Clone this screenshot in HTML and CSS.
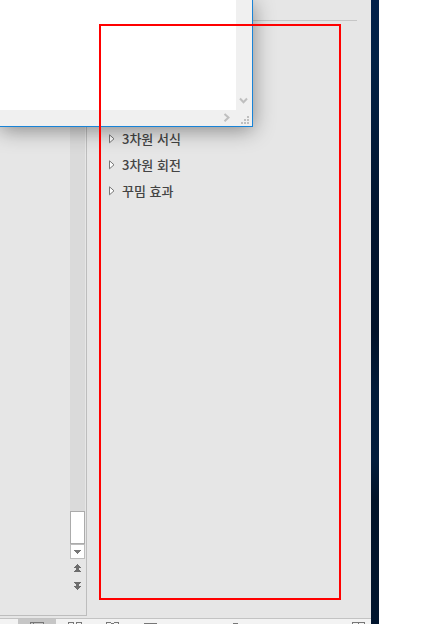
FILE: index.html
```html
<!DOCTYPE html>
<html lang="ko">
<head>
<meta charset="utf-8">
<title>도형 서식</title>
<link rel="stylesheet" href="styles.css">
</head>
<body>
<div class="screen">
  <div class="app">
    <div class="workspace">
      <div class="slide-area">
        <div class="scrollbar">
          <div class="track"></div>
          <div class="thumb"></div>
          <div class="scroll-button"><svg width="7" height="4" shape-rendering="crispEdges"><path fill="#777" d="M0 0h7v1H0zM1 1h5v1H1zM2 2h3v1H2zM3 3h1v1H3z"/></svg></div>
          <svg class="page-nav" width="7" height="26" shape-rendering="crispEdges"><path fill="#6c6c6c" d="M3 0h1v1H3zM2 1h3v1H2zM1 2h5v1H1zM0 3h7v1H0zM2 4h3v1H2zM2 5h3v1H2zM1 6h5v1H1zM0 7h7v1H0zM0 18h7v1H0zM1 19h5v1H1zM2 20h3v1H2zM2 21h3v1H2zM0 22h7v1H0zM1 23h5v1H1zM2 24h3v1H2zM3 25h1v1H3z"/></svg>
        </div>
      </div>
      <div class="pane">
        <div class="divider"></div>
        <ul class="sections">
          <li><svg width="6" height="10"><path d="M.5 .8L5 4.8L.5 8.8z"/></svg><span>3차원 서식</span></li>
          <li><svg width="6" height="10"><path d="M.5 .8L5 4.8L.5 8.8z"/></svg><span>3차원 회전</span></li>
          <li><svg width="6" height="10"><path d="M.5 .8L5 4.8L.5 8.8z"/></svg><span>꾸밈 효과</span></li>
        </ul>
      </div>
    </div>
    <div class="statusbar">
      <svg width="371" height="5" shape-rendering="crispEdges">
        <path fill="#c6c6c6" d="M18 0h38v5H18z"/>
        <path fill="#777" d="M30 3h14v1H30zM30 4h1v1h-1zM33 4h1v1h-1zM43 4h1v1h-1zM68 3h6v1h-6zM68 4h1v1h-1zM73 4h1v1h-1zM76 3h6v1h-6zM76 4h1v1h-1zM81 4h1v1h-1zM106 3h5v1h-5zM106 4h1v1h-1zM111 4h3v1h-3zM114 3h5v1h-5zM118 4h1v1h-1zM144 4h13v1h-13zM233 4h5v1h-5zM352 3h13v1h-13zM352 4h1v1h-1zM358 4h1v1h-1zM364 4h1v1h-1z"/>
      </svg>
    </div>
  </div>
  <div class="desktop"></div>
  <div class="dialog">
    <div class="dialog-body"></div>
    <svg class="dialog-scroll" width="252" height="126" shape-rendering="crispEdges">
      <g fill="none" stroke="#bfbfbf" stroke-width="2" shape-rendering="auto"><path d="M240 98.5l3.5 3.7l3.5-3.7"/><path d="M224.5 114l4 3.6l-4 3.6"/></g>
      <path fill="#bfbfbf" d="M247 116h2v2h-2zM244 119h2v2h-2zM247 119h2v2h-2zM241 122h2v2h-2zM244 122h2v2h-2zM247 122h2v2h-2z"/>
    </svg>
  </div>
  <div class="highlight"></div>
</div>
</body>
</html>
```
FILE: styles.css
```css
* { box-sizing: border-box; }
body { margin: 0; background: #fff; font-family: "Noto Sans CJK KR", sans-serif; }
.screen { position: relative; display: flex; width: 440px; height: 624px; overflow: hidden; }
.app { display: flex; flex-direction: column; width: 371px; background: #e6e6e6; }
.workspace { display: flex; height: 618px; }
.slide-area { display: flex; justify-content: flex-end; width: 87px; height: 616px; padding-right: 1px; border-right: 1px solid #bdbdbd; border-bottom: 1px solid #bdbdbd; }
.scrollbar { display: flex; flex-direction: column; align-items: center; width: 15px; }
.track { width: 15px; height: 511px; background: #dadada; }
.thumb { width: 15px; height: 33px; background: #fff; border: 1px solid #ababab; }
.scroll-button { display: flex; align-items: center; justify-content: center; width: 15px; height: 15px; background: #fff; border: 1px solid #bdbdbd; }
.page-nav { margin-top: 5px; }
.pane { flex: 1; padding-top: 20px; }
.divider { height: 1px; margin-right: 14px; background: #c6c6c6; }
.sections { list-style: none; margin: 105px 0 0 22px; padding: 0; }
.sections li { display: flex; align-items: center; gap: 7px; height: 26px; font-size: 13px; font-weight: 500; line-height: 26px; color: #444; white-space: nowrap; }
.sections path { fill: #fff; stroke: #777; stroke-width: 1; }
.statusbar { height: 6px; border-top: 1px solid #c3c3c3; background: #f3f3f3; }
.statusbar svg { display: block; }
.desktop { width: 8px; background: linear-gradient(#00204a 0, #002145 60px, #001530 210px, #00122a 330px, #001b3a 390px, #001c3c 460px, #001329 500px, #00152e 624px); }
.dialog { position: absolute; left: 0; top: 0; width: 253px; height: 127px; background: #f0f0f0; border-right: 1px solid #1883d7; border-bottom: 1px solid #1883d7; box-shadow: 0 3px 20px rgba(0, 0, 0, .42); }
.dialog-body { width: 236px; height: 110px; background: #fff; }
.dialog-scroll { position: absolute; left: 0; top: 0; }
.highlight { position: absolute; left: 99px; top: 24px; width: 242px; height: 576px; border: 2px solid #f00; }
```
